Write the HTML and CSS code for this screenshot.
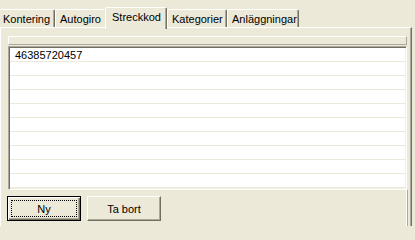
FILE: index.html
```html
<!DOCTYPE html>
<html>
<head>
<meta charset="utf-8">
<link rel="stylesheet" href="styles.css">
</head>
<body>
<div class="tabs">
  <div class="tab first">Kontering</div>
  <div class="tab w-auto">Autogiro</div>
  <div class="tab sel">Streckkod</div>
  <div class="tab w-kat">Kategorier</div>
  <div class="tab w-anl">Anläggningar</div>
</div>
<div class="panel">
  <div class="hdr"></div>
  <div class="list">
    <div class="row">46385720457</div>
    <div class="row"></div>
    <div class="row"></div>
    <div class="row"></div>
    <div class="row"></div>
    <div class="row"></div>
    <div class="row"></div>
    <div class="row"></div>
    <div class="row"></div>
    <div class="row"></div>
  </div>
  <div class="bottom">
    <div class="btn default"><span class="focus">Ny</span></div>
    <div class="btn">Ta bort</div>
  </div>
</div>
</body>
</html>
```

FILE: styles.css
```css
html, body {
  margin: 0;
  padding: 0;
  background: #ECE9D8;
  width: 415px;
  height: 226px;
  overflow: hidden;
  font-family: "Liberation Sans", Arial, sans-serif;
  font-size: 11px;
  color: #000;
}

.tabs {
  display: flex;
  align-items: flex-end;
  height: 27px;
  position: relative;
  z-index: 2;
}

.tab {
  box-sizing: border-box;
  height: 18px;
  padding: 3px 0 0 4px;
  line-height: 13px;
  border-top: 1px solid #fff;
  border-left: 1px solid #fff;
  border-right: 1px solid #716F64;
  border-radius: 2px 2px 0 0;
  box-shadow: inset -1px 0 #ACA899;
  background: #ECE9D8;
  white-space: nowrap;
}

.tab.first {
  width: 55px;
  border-left: none;
  padding-left: 3px;
  border-top-left-radius: 0;
}

.w-auto { width: 52px; }
.w-kat { width: 60px; }
.w-anl { width: 72px; }

.tab.sel {
  width: 62px;
  height: 22px;
  margin-left: -2px;
  margin-bottom: -2px;
  padding-left: 6px;
  position: relative;
  z-index: 3;
}

.panel {
  box-sizing: border-box;
  width: 412px;
  height: 199px;
  border-top: 1px solid #fff;
  border-left: 1px solid #fff;
  border-right: 1px solid #716F64;
  box-shadow: inset -1px 0 #ACA899;
  background: #ECE9D8;
  padding-top: 8px;
  overflow: hidden;
}

.hdr {
  box-sizing: border-box;
  margin-left: 7px;
  width: 399px;
  height: 9px;
  border-top: 1px solid #fff;
  border-left: 1px solid #fff;
  border-right: 1px solid #ACA899;
  border-bottom: 1px solid #ACA899;
}

.list {
  box-sizing: border-box;
  margin: 1px 0 0 7px;
  width: 399px;
  height: 144px;
  padding: 1px;
  background: #fff;
  border-top: 1px solid #ACA899;
  border-left: 1px solid #ACA899;
  border-right: 1px solid #fff;
  border-bottom: 1px solid #fff;
  box-shadow: inset 1px 1px #716F64, inset -1px -1px #F1EFE2;
}

.row {
  box-sizing: border-box;
  height: 14px;
  padding: 1px 0 0 5px;
  line-height: 12px;
  border-bottom: 1px solid #ECE9D8;
  background: #fff;
}

.bottom {
  box-sizing: border-box;
  width: 407px;
  height: 36px;
  border-right: 1px solid #ACA899;
  box-shadow: inset -1px 0 #fff;
  display: flex;
  gap: 6px;
  padding: 6px 0 0 6px;
}

.btn {
  box-sizing: border-box;
  width: 74px;
  height: 25px;
  border-top: 1px solid #fff;
  border-left: 1px solid #fff;
  border-right: 1px solid #716F64;
  border-bottom: 1px solid #716F64;
  box-shadow: inset -1px -1px #ACA899;
  background: #ECE9D8;
  display: flex;
  align-items: center;
  justify-content: center;
}

.btn.default {
  border: 1px solid #000;
  box-shadow: inset 1px 1px #fff, inset -1px -1px #716F64, inset -2px -2px #ACA899;
  padding: 3px;
}

.focus {
  box-sizing: border-box;
  flex: 1;
  align-self: stretch;
  display: flex;
  align-items: center;
  justify-content: center;
  border: 1px dotted #000;
}
```
